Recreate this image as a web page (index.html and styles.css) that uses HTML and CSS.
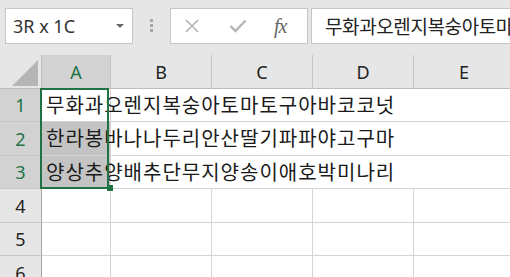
FILE: index.html
```html
<!DOCTYPE html>
<html lang="ko">
<head>
    <meta charset="UTF-8">
    <title>Sheet</title>
    <link rel="stylesheet" href="styles.css">
</head>
<body>
    <div class="topbar">
        <div class="namebox">
            <span>3R x 1C</span>
            <span class="caret"></span>
        </div>
        <div class="dots"><i></i><i></i><i></i></div>
        <div class="fx-buttons">
            <svg class="btn-x" width="16" height="14" viewBox="0 0 16 14">
                <path d="M2 1 L14 13 M14 1 L2 13" stroke="#b4b4b4" stroke-width="1.6" fill="none"/>
            </svg>
            <svg class="btn-ok" width="18" height="14" viewBox="0 0 18 14">
                <path d="M1.5 7 L6.5 12 L16.5 1.5" stroke="#b4b4b4" stroke-width="2.4" fill="none"/>
            </svg>
            <span class="btn-fx">fx</span>
        </div>
        <div class="formula">무화과오렌지복숭아토마토구아바코코넛</div>
    </div>

    <div class="sheet">
        <div class="grid">
            <!-- column headers -->
            <div class="corner"><span class="corner-tri"></span></div>
            <div class="col-head selected">A</div>
            <div class="col-head">B</div>
            <div class="col-head">C</div>
            <div class="col-head">D</div>
            <div class="col-head">E</div>

            <!-- rows with data -->
            <div class="row-head selected">1</div>
            <div class="cell active">무화과오렌지복숭아토마토구아바코코넛</div>
            <div class="cell spill"></div>

            <div class="row-head selected">2</div>
            <div class="cell picked">한라봉바나나두리안산딸기파파야고구마</div>
            <div class="cell spill"></div>

            <div class="row-head selected">3</div>
            <div class="cell picked">양상추양배추단무지양송이애호박미나리</div>
            <div class="cell spill"></div>

            <!-- empty rows -->
            <div class="row-head">4</div>
            <div class="cell"></div><div class="cell"></div><div class="cell"></div><div class="cell"></div><div class="cell"></div>
            <div class="row-head">5</div>
            <div class="cell"></div><div class="cell"></div><div class="cell"></div><div class="cell"></div><div class="cell"></div>
            <div class="row-head">6</div>
            <div class="cell"></div><div class="cell"></div><div class="cell"></div><div class="cell"></div><div class="cell"></div>
        </div>
        <div class="selection"></div>
        <div class="fill-handle"></div>
    </div>
</body>
</html>
```

FILE: styles.css
```css
body {
    margin: 0;
    background: #e6e6e6;
    font-family: "Noto Sans", Arial, sans-serif;
    color: #222;
    overflow: hidden;
}

.topbar {
    display: flex;
    align-items: flex-start;
    box-sizing: border-box;
    height: 55px;
    padding: 8px 0 0 5px;
    white-space: nowrap;
}

.namebox {
    display: flex;
    align-items: center;
    justify-content: space-between;
    box-sizing: border-box;
    width: 128px;
    height: 36px;
    padding: 0 8px 0 7px;
    background: #fff;
    border: 1px solid #c6c6c6;
    font-size: 18px;
    color: #333;
}

.caret {
    width: 0;
    height: 0;
    border-left: 4px solid transparent;
    border-right: 4px solid transparent;
    border-top: 4px solid #666;
}

.dots {
    display: flex;
    flex-direction: column;
    gap: 2px;
    margin: 11px 0 0 17px;
}

.dots i {
    display: block;
    width: 3px;
    height: 3px;
    background: #a6a6a6;
}

.fx-buttons {
    display: flex;
    align-items: center;
    box-sizing: border-box;
    width: 138px;
    height: 36px;
    margin-left: 17px;
    padding-left: 13px;
    background: #fff;
    border: 1px solid #c6c6c6;
}

.btn-ok {
    margin-left: 29px;
}

.btn-fx {
    margin-left: 27px;
    font-family: "Liberation Serif", serif;
    font-style: italic;
    font-size: 20px;
    color: #666;
    letter-spacing: -1px;
}

.formula {
    flex: 1;
    box-sizing: border-box;
    height: 36px;
    margin: 0 -40px 0 3px;
    padding: 4px 0 0 13px;
    background: #fff;
    border: 1px solid #c6c6c6;
    font-family: "Noto Sans CJK KR", sans-serif;
    font-size: 19px;
    letter-spacing: -0.4px;
    line-height: 26px;
    color: #222;
    overflow: hidden;
}

.sheet {
    position: relative;
}

.grid {
    display: grid;
    grid-template-columns: 42px 69px 101px 101px 101px 101px;
    grid-template-rows: 34px 33px 34px 33px 34px 33px 34px;
    background: #fff;
}

.corner, .col-head, .row-head {
    box-sizing: border-box;
    background: #e6e6e6;
    display: flex;
    align-items: center;
    justify-content: center;
    font-size: 18px;
}

.corner {
    position: relative;
    border-right: 1px solid #bdbdbd;
    border-bottom: 1px solid #bdbdbd;
}

.corner-tri {
    position: absolute;
    right: 3px;
    bottom: 2px;
    width: 26px;
    height: 26px;
    background: #b5b5b5;
    clip-path: polygon(100% 0, 100% 100%, 0 100%);
}

.col-head {
    border-right: 1px solid #c6c6c6;
    border-bottom: 1px solid #bdbdbd;
    padding-top: 1px;
}

.row-head {
    border-right: 1px solid #a6a6a6;
    border-bottom: 1px solid #c6c6c6;
}

.col-head.selected, .row-head.selected {
    background: #d2d2d2;
    color: #217346;
}

.cell {
    box-sizing: border-box;
    border-right: 1px solid #d4d4d4;
    border-bottom: 1px solid #d4d4d4;
    padding: 0 0 0 4px;
    font-family: "Noto Sans CJK KR", sans-serif;
    font-size: 20px;
    letter-spacing: 1px;
    line-height: 32px;
    white-space: nowrap;
    color: #1a1a1a;
}

.cell.picked {
    background: #c4c4c4;
}

.cell.spill {
    grid-column: span 4;
    border-right: none;
}

.selection {
    position: absolute;
    left: 40px;
    top: 33px;
    width: 69px;
    height: 101px;
    box-sizing: border-box;
    border: 2px solid #217346;
}

.fill-handle {
    position: absolute;
    left: 107px;
    top: 130px;
    width: 6px;
    height: 6px;
    background: #217346;
}
```
